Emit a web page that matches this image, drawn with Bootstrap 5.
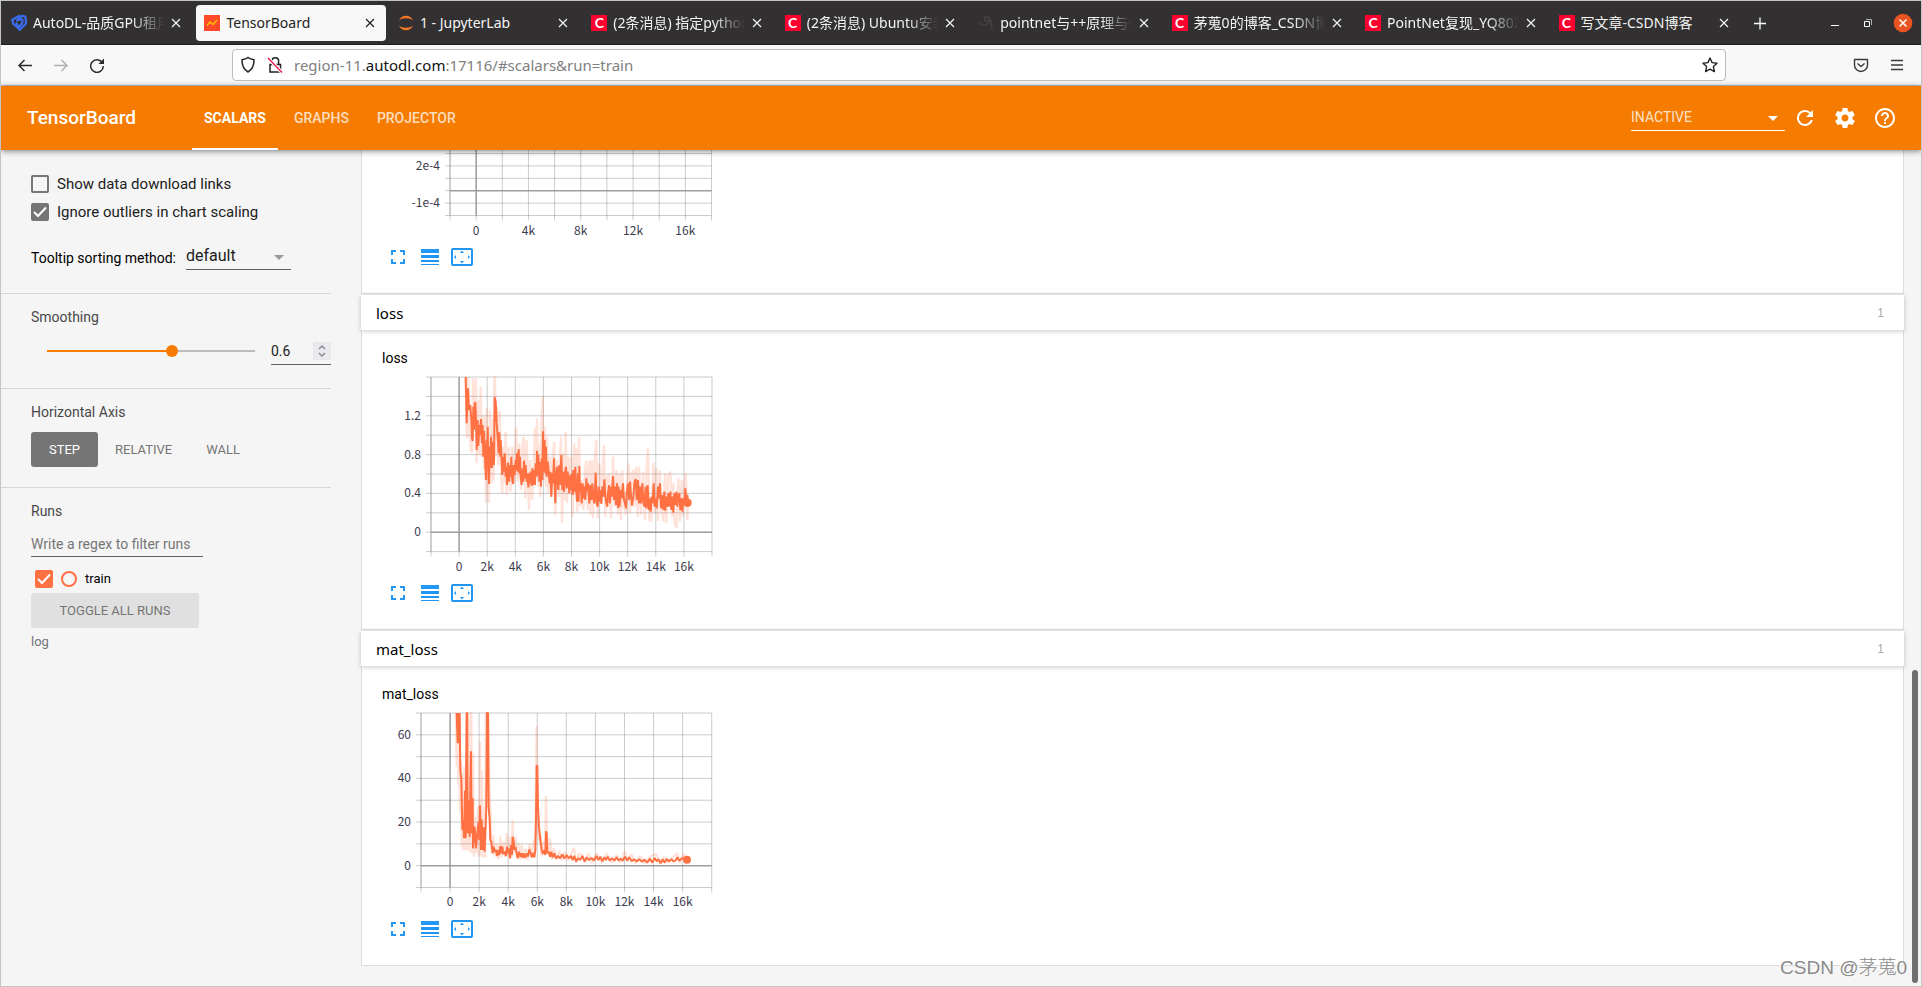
<!DOCTYPE html>
<html lang="en">
<head>
<meta charset="utf-8">
<meta name="viewport" content="width=device-width, initial-scale=1">
<title>TensorBoard</title>
<link rel="stylesheet" href="https://cdn.jsdelivr.net/npm/bootstrap@5.3.0/dist/css/bootstrap.min.css">
<style>
:root{--tb-orange:#f57c00;--run:#ff7043;--ui:"Noto Sans","Noto Sans CJK SC",sans-serif}
body{font-family:Roboto,"Noto Sans CJK SC",sans-serif;font-size:14px;line-height:20px;background:#f5f5f5;color:#212121}
.frame{border:1px solid #c4c4c4}
button,select,input{font-family:inherit}
.bare{background:none;border:0;padding:0;color:inherit;display:inline-flex;align-items:center;justify-content:center}
svg{display:block;flex:none}
/* browser window */
.tabstrip{height:44px;background:#323031;border-bottom:1px solid #1f1d1e;font-family:var(--ui);color:#f4f4f4}
.btab{flex:1 1 0;min-width:0;height:36px;margin:0 2px;padding:0 10px 0 8px;border-radius:4px;gap:6px}
.btab.active{background:#f8f8f8;color:#222}
.btab a{color:inherit;text-decoration:none;flex:1;min-width:0;overflow:hidden;white-space:nowrap}
.btab.cut a{-webkit-mask-image:linear-gradient(to left,transparent 0,#000 32px);mask-image:linear-gradient(to left,transparent 0,#000 32px)}
.winctl{width:179px;gap:17px;padding-right:8px}
.csdn{width:16px;height:16px;background:#fc0030;color:#fff;font:bold 14px/16px Lato,sans-serif;text-align:center;flex:none}
.urlbar{height:41px;background:#f8f8f8;border-bottom:1px solid #c0c0c0}
.navbtns{width:231px;padding-left:16px;gap:20px}
.urlbox{height:32px;border:1px solid #bdbdbd;border-radius:4px;background:#fff;padding:0 7px;gap:10px;font-family:var(--ui)}
.urltext{color:#808080;outline:0;white-space:nowrap;font-size:15px}
.urltext b{color:#111;font-weight:400}
.urlend{width:195px;gap:20px;padding-right:16px}
/* TensorBoard header */
.tbhead{height:64px;background:var(--tb-orange);color:#fff;position:relative;z-index:2;box-shadow:0 1px 6px rgba(0,0,0,.5);padding:0 16px 0 26px}
.tbhead h1{font-size:19px;line-height:28px;font-weight:500;width:165px}
.plug{display:flex;align-items:center;height:64px;padding:0 12px;color:rgba(255,255,255,.75);text-decoration:none;border-top:2px solid transparent;border-bottom:2px solid transparent;font-weight:500}
.plug:hover{color:#fff}
.plug.active{color:#fff;border-bottom-color:#fff;font-weight:700}
.line-select{appearance:none;background:no-repeat right 4px center/16px url("data:image/svg+xml,%3Csvg xmlns='http://www.w3.org/2000/svg' viewBox='0 0 16 16'%3E%3Cpath fill='%23999' d='M3 6h10l-5 5z'/%3E%3C/svg%3E");border:0;border-bottom:1px solid #616161;border-radius:0;padding:0 0 2px;color:#212121;height:25px;font-size:16px}
.sort-select{width:105px}
.reload-select{width:154px;border-color:#fff;color:rgba(255,255,255,.8);font-size:14px;height:26px;background-image:url("data:image/svg+xml,%3Csvg xmlns='http://www.w3.org/2000/svg' viewBox='0 0 16 16'%3E%3Cpath fill='%23fff' d='M3 6h10l-5 5z'/%3E%3C/svg%3E")}
.hbtn{width:40px;height:40px}
/* settings side */
.side{width:330px;flex:none}
.side section{padding:13px 0 23px 30px;border-bottom:1px solid #d6d6d6}
.side .general{padding-top:25px}
.side .axes{padding-bottom:20px}
.side h2{font-size:14px;line-height:20px;font-weight:400;color:#484848;margin:0 0 10px}
.tick{appearance:none;width:18px;height:18px;border:2px solid #757575;border-radius:2px;margin:0;flex:none}
.tick:checked{border:0;background:#757575 center/18px url("data:image/svg+xml,%3Csvg xmlns='http://www.w3.org/2000/svg' viewBox='0 0 18 18'%3E%3Cpath fill='none' stroke='%23fff' stroke-width='2' d='M3 9l4 4 8-8.500'/%3E%3C/svg%3E")}
.tick.run:checked{background-color:var(--run)}
.opt{font-size:15px;line-height:18px;gap:8px;margin-bottom:10px}
.sorting{gap:10px;margin-top:24px}
.slide{appearance:none;width:220px;height:12px;margin:0 10px;background:linear-gradient(to right,var(--tb-orange) 60%,#bdbdbd 0) center/calc(100% - 12px) 2px no-repeat}
.slide::-webkit-slider-thumb{appearance:none;width:12px;height:12px;border-radius:50%;background:var(--tb-orange)}
.numbox{width:60px;height:28px;border-bottom:1px solid #616161}
.numbox input{appearance:textfield;border:0;background:none;width:42px;padding:0;color:#212121}
.numbox input::-webkit-inner-spin-button{display:none}
.numbox button{width:18px;height:18px;background:#e9e9ed}
.axis{height:35px;font-size:13px;border-radius:3px;color:#757575;padding:0 17px}
.axis.active{background:#757575;color:#fff;padding:0 18px}
.regex{width:172px;border:0;border-bottom:1px solid #616161;background:none;padding:0;height:26px}
.regex::placeholder{color:#757575;opacity:1}
.runrow{height:18px;margin:13px 0 5px;padding-left:4px;gap:8px;font-size:13px}
.ring{width:16px;height:16px;border:2px solid var(--run);border-radius:50%}
.toggle{width:168px;height:35px;font-size:13px;background:#e0e0e0;color:#757575;border-radius:3px}
.logdir{font-size:13px;color:#757575}
/* chart panes */
.main{padding:0 17px 0 30px}
.pane{background:#fff;border:1px solid #ddd;border-top:0;padding:18px 20px 24px}
.pane.first{padding-top:0}
.pane h3{font-size:14px;line-height:20px;font-weight:400;color:#000;margin:0}
.cat{height:35px;margin-top:1px;padding:0 20px 0 15px;background:#fff;box-shadow:0 1px 5px rgba(0,0,0,.22);position:relative;font-size:15px;color:#000;font-family:var(--ui)}
.cat small{font:12px/20px "Liberation Sans",sans-serif;color:#aaa}
.plot text{font:12px "Noto Sans CJK SC",sans-serif;fill:#3d3b4f}
.tools{margin-top:5px;color:#2196f3}
.tools button{width:32px;height:24px}
/* overlays */
.thumb{position:absolute;right:3px;bottom:3px;width:6px;height:313px;border-radius:3px;background:#6e6e6e}
.wmark{position:absolute;right:14px;bottom:4px;font:19px/28px "Liberation Sans","Noto Sans CJK SC",sans-serif;font-weight:300;color:#8a8a8a;text-shadow:-1px -1px 0 #fff}
</style>
</head>
<body>
<div class="frame min-vh-100 d-flex flex-column position-relative overflow-hidden">

<div class="tabstrip d-flex align-items-center">
  <div class="d-flex flex-fill" id="tabs"></div>
  <div class="winctl d-flex align-items-center">
    <button class="bare me-auto ms-2" aria-label="New tab"><svg width="20" height="20" viewBox="0 0 20 20" stroke="#fff" stroke-width="1.300"><path d="M10 4.500v12M4 10.500h12"/></svg></button>
    <button class="bare" aria-label="Minimize"><svg width="16" height="16" stroke="#fff"><path d="M4 10.500h8"/></svg></button>
    <button class="bare" aria-label="Restore"><svg width="16" height="16" fill="none" stroke="#fff"><path d="M4.500 6.500h5v5h-5z"/><path d="M6 4.500h5.500V10" stroke="#aaa"/></svg></button>
    <button class="bare" aria-label="Close"><svg width="20" height="20"><circle cx="10" cy="10" r="9.300" fill="#e95420"/><path d="M6.500 6.500l7 7M13.500 6.500l-7 7" stroke="#fff" stroke-width="1.500"/></svg></button>
  </div>
</div>

<div class="urlbar d-flex align-items-center">
  <div class="navbtns d-flex">
    <button class="bare" aria-label="Back"><svg width="16" height="16" fill="none" stroke="#2b2b2b" stroke-width="1.500"><path d="M15 8.500H2M7.500 3L2 8.500 7.500 14"/></svg></button>
    <button class="bare" aria-label="Forward"><svg width="16" height="16" fill="none" stroke="#b0b0b0" stroke-width="1.500"><path d="M1 8.500h13M8.500 3L14 8.500 8.500 14"/></svg></button>
    <button class="bare" aria-label="Reload"><svg width="16" height="16" fill="none" stroke="#2b2b2b" stroke-width="1.500"><path d="M13.200 5.500A6.300 6.300 0 1 0 14.300 9"/><path d="M15 1.500v5.500H9.500z" fill="#2b2b2b" stroke="none"/></svg></button>
  </div>
  <div class="urlbox d-flex align-items-center flex-fill">
    <svg width="16" height="18" viewBox="0 0 16 18" fill="none" stroke="#222" stroke-width="1.500"><path d="M8 1.500c2 1.600 4 2 6 2.300 0 6-1.500 9.700-6 12.200C3.500 13.500 2 9.800 2 3.800c2-.3 4-.7 6-2.300z"/></svg>
    <svg width="18" height="18" viewBox="0 0 18 18" fill="none" stroke="#222" stroke-width="1.500"><path d="M4 8.500h10.500V16H4zM6 8V5a3.300 3.300 0 0 1 6.600 0v3"/><path d="M2 2l14 14.500" stroke="#fff" stroke-width="3.500"/><path d="M2 2l14 14.500" stroke="#e22850"/></svg>
    <div class="urltext flex-fill" role="textbox" contenteditable="true" spellcheck="false" aria-label="Address">region-11.<b>autodl.com</b>:17116/#scalars&amp;run=train</div>
    <button class="bare" aria-label="Bookmark"><svg width="16" height="16" viewBox="0 0 16 16" fill="none" stroke="#222" stroke-width="1.400" stroke-linejoin="round"><path d="M8 1l2.100 4.600 4.900.6-3.600 3.400 1 5L8 12.200l-4.400 2.400 1-5L1 6.200l4.900-.6z"/></svg></button>
  </div>
  <div class="urlend d-flex justify-content-end">
    <button class="bare" aria-label="Pocket"><svg width="16" height="16" viewBox="0 0 16 16" fill="none" stroke="#3a3a3a" stroke-width="1.400" stroke-linejoin="round"><path d="M1.500 2.500h13V8a6.500 6.500 0 0 1-13 0zM4.500 6.500L8 9.500l3.500-3"/></svg></button>
    <button class="bare" aria-label="Menu"><svg width="16" height="16" stroke="#3a3a3a" stroke-width="1.400"><path d="M2 3.500h12M2 8h12M2 12.500h12"/></svg></button>
  </div>
</div>

<header class="tbhead d-flex align-items-center">
  <h1 class="m-0">TensorBoard</h1>
  <nav class="d-flex gap-1 me-auto">
    <a class="plug active" href="#scalars">SCALARS</a>
    <a class="plug" href="#graphs">GRAPHS</a>
    <a class="plug" href="#projector">PROJECTOR</a>
  </nav>
  <select class="line-select reload-select" aria-label="Inactive dashboards"><option>INACTIVE</option></select>
  <button class="bare hbtn" aria-label="Reload data"><svg width="24" height="24" viewBox="0 0 24 24" fill="#fff"><path d="M17.650 6.350C16.200 4.900 14.210 4 12 4c-4.420 0-7.990 3.580-7.990 8s3.570 8 7.990 8c3.730 0 6.840-2.550 7.730-6h-2.080c-.82 2.330-3.040 4-5.650 4-3.310 0-6-2.690-6-6s2.690-6 6-6c1.660 0 3.140.69 4.220 1.780L13 11h7V4l-2.350 2.350z"/></svg></button>
  <button class="bare hbtn" aria-label="Settings"><svg width="24" height="24" viewBox="0 0 24 24" fill="#fff"><path d="M19.430 12.980c.04-.32.070-.64.070-.98s-.03-.66-.07-.98l2.110-1.650c.19-.15.240-.42.120-.64l-2-3.460c-.12-.22-.39-.3-.61-.22l-2.490 1c-.52-.4-1.080-.73-1.690-.98l-.38-2.650C14.460 2.180 14.250 2 14 2h-4c-.25 0-.46.180-.49.420l-.38 2.650c-.61.250-1.170.590-1.690.980l-2.490-1c-.23-.09-.49 0-.61.220l-2 3.460c-.13.220-.07.490.12.640l2.110 1.650c-.04.320-.07.650-.07.980s.03.660.070.980l-2.110 1.650c-.19.150-.24.420-.12.640l2 3.460c.12.220.39.300.61.220l2.490-1c.52.400 1.080.730 1.690.980l.38 2.650c.03.240.24.420.49.420h4c.25 0 .46-.18.490-.42l.38-2.650c.61-.25 1.170-.59 1.690-.98l2.490 1c.23.090.49 0 .61-.22l2-3.460c.12-.22.070-.49-.12-.64l-2.110-1.650zM12 15.500c-1.930 0-3.500-1.570-3.500-3.500s1.570-3.500 3.500-3.500 3.500 1.570 3.500 3.500-1.570 3.500-3.500 3.500z"/></svg></button>
  <button class="bare hbtn" aria-label="Help"><svg width="24" height="24" viewBox="0 0 24 24" fill="#fff"><path d="M11 18h2v-2h-2v2zm1-16C6.480 2 2 6.480 2 12s4.480 10 10 10 10-4.480 10-10S17.520 2 12 2zm0 18c-4.410 0-8-3.590-8-8s3.590-8 8-8 8 3.590 8 8-3.590 8-8 8zm0-14c-2.210 0-4 1.790-4 4h2c0-1.100.900-2 2-2s2 .900 2 2c0 2-3 1.750-3 5h2c0-2.250 3-2.500 3-5 0-2.210-1.790-4-4-4z"/></svg></button>
</header>

<div class="d-flex flex-fill">
  <aside class="side">
    <section class="general">
      <div class="opt d-flex"><input class="tick" type="checkbox" id="dl"><label for="dl">Show data download links</label></div>
      <div class="opt d-flex"><input class="tick" type="checkbox" id="ig" checked><label for="ig">Ignore outliers in chart scaling</label></div>
      <div class="sorting d-flex align-items-center"><label for="sort" class="text-black">Tooltip sorting method:</label>
        <select id="sort" class="line-select sort-select"><option>default</option></select></div>
    </section>
    <section>
      <h2>Smoothing</h2>
      <div class="d-flex align-items-center"><input class="slide" type="range" min="0" max="1" step="0.001" value="0.6" aria-label="Smoothing">
        <div class="numbox d-flex align-items-center"><input type="number" value="0.6" step="0.1" aria-label="Smoothing value"><button class="bare" aria-label="Step"><svg width="12" height="14" fill="none" stroke="#8c8c98" stroke-width="1.500"><path d="M3 5l3-3 3 3M3 9l3 3 3-3"/></svg></button></div></div>
    </section>
    <section class="axes">
      <h2>Horizontal Axis</h2>
      <div class="d-flex"><button class="bare axis active">STEP</button><button class="bare axis">RELATIVE</button><button class="bare axis">WALL</button></div>
    </section>
    <section class="border-0">
      <h2>Runs</h2>
      <input class="regex d-block" placeholder="Write a regex to filter runs" aria-label="Run filter">
      <div class="runrow d-flex align-items-center"><input class="tick run" type="checkbox" id="tr" checked><span class="ring"></span><label for="tr" class="text-black">train</label></div>
      <button class="bare toggle">TOGGLE ALL RUNS</button>
      <div class="logdir mt-1">log</div>
    </section>
  </aside>

  <main class="main flex-fill">
    <div class="pane first"><svg class="plot" id="c1" width="340" height="90" viewBox="382 150 340 90"></svg><div class="tools d-flex"></div></div>
    <div class="cat d-flex align-items-center justify-content-between"><span>loss</span><small>1</small></div>
    <div class="pane"><h3>loss</h3><svg class="plot" id="c2" width="340" height="208" viewBox="382 368 340 208"></svg><div class="tools d-flex"></div></div>
    <div class="cat d-flex align-items-center justify-content-between"><span>mat_loss</span><small>1</small></div>
    <div class="pane"><h3>mat_loss</h3><svg class="plot" id="c3" width="340" height="208" viewBox="382 704 340 208"></svg><div class="tools d-flex"></div></div>
  </main>
</div>
<div class="thumb"></div>
<div class="wmark">CSDN @茅蒐0</div>
</div>

<script>
// Browser tabs
const csdn='<span class="csdn">C</span>';
const tabs=[
 ['AutoDL-品质GPU租用','<svg width="16" height="18" viewBox="0 0 16 18" fill="none" stroke="#3a6df0" stroke-width="2.200" stroke-linejoin="round"><path d="M11.500 5L6 6.500l5-4.800 4 1"/><path d="M14.500 2.500l.5 7L8.500 16l-1-2.500 3.800-4.500.2-4"/><path d="M9 1.500L1 6l1.500 4L7 14l-.5-3L5 8.500"/></svg>',1],
 ['TensorBoard','<svg width="16" height="16" viewBox="0 0 16 16"><path fill="#ff4a2a" d="M0 0h16v16H0z"/><path d="M3 10.500L6 7l3 2.500L13 5" fill="none" stroke="#ffc400" stroke-width="1.500"/></svg>',0],
 ['1 - JupyterLab','<svg width="16" height="16" viewBox="0 0 16 16" fill="#f37626"><path d="M1 5.500C3-.8 13-.8 15 5.500 12 2.500 4 2.500 1 5.500zM1 10.500c2 6.300 12 6.300 14 0-3 3-11 3-14 0z"/></svg>',0],
 ['(2条消息) 指定python',csdn,1],['(2条消息) Ubuntu安装',csdn,1],
 ['pointnet与++原理与代','<svg width="16" height="16" viewBox="0 0 16 16" fill="none" stroke="#454342" stroke-width="1.500"><path d="M2 8c2 3 7 3 9-1V2H7v4h6l1 8"/></svg>',1],
 ['茅蒐0的博客_CSDN博客',csdn,1],['PointNet复现_YQ8023',csdn,1],['写文章-CSDN博客',csdn,0]];
document.getElementById('tabs').innerHTML=tabs.map((t,i)=>`<div class="btab d-flex align-items-center${i==1?' active':''}${t[2]?' cut':''}">${t[1]}<a href="#">${t[0]}</a><button class="bare" aria-label="Close tab"><svg width="12" height="12" stroke="currentColor" stroke-width="1.200"><path d="M2 2l8 8M10 2l-8 8"/></svg></button></div>`).join('');

// Buttons below each chart
document.querySelectorAll('.tools').forEach(t=>t.innerHTML=`
<button class="bare" aria-label="Expand"><svg width="24" height="24" viewBox="0 0 24 24" fill="currentColor"><path d="M7 14H5v5h5v-2H7v-3zm-2-4h2V7h3V5H5v5zm12 7h-3v2h5v-5h-2v3zM14 5v2h3v3h2V5h-5z"/></svg></button>
<button class="bare" aria-label="Toggle log scale"><svg width="24" height="24" viewBox="0 0 24 24" fill="currentColor"><path d="M3 4h18v4H3zM3 10h18v3H3zM3 15h18v2H3zM3 19h18v1H3z"/></svg></button>
<button class="bare" aria-label="Fit domain"><svg width="24" height="24" viewBox="0 0 24 24" fill="currentColor"><path fill-rule="evenodd" d="M3 3h18a2 2 0 0 1 2 2v14a2 2 0 0 1-2 2H3a2 2 0 0 1-2-2V5a2 2 0 0 1 2-2zm0 2v14h18V5z"/><path d="M12 5.500l2 2.500h-4zM12 18.500l2-2.500h-4zM4 12l2-2v4zM20 12l-2-2v4z"/></svg></button>`);

// Grid, axes, tick labels and the two lines of one chart
function plot(id,o){
 const X=i=>o.x0+o.dx*i, Y=j=>o.y0+o.dy*j, R=X(o.nx-1), B=Y(o.ny-1), L=X(0), T=o.top;
 let s='<g stroke="#808080" stroke-opacity=".4" stroke-width="1">';
 for(let i=0;i<o.nx;i++)s+=`<path d="M${X(i)} ${T}V${B+5}"/>`;
 for(let j=0;j<o.ny;j++)s+=`<path d="M${L-5} ${Y(j)}H${R}"/>`;
 s+=`</g><g stroke="#808080" stroke-opacity=".65" stroke-width="1.500"><path d="M${X(1)} ${T}V${B}M${L} ${Y(o.zero)}H${R}"/></g>`;
 s+=`<path stroke="#999" stroke-opacity=".6" d="M${L} ${T}V${B}"/>`;
 o.xl.forEach(([i,t])=>s+=`<text x="${X(i)}" y="${B+19}" text-anchor="middle">${t}</text>`);
 o.yl.forEach(([j,t])=>s+=`<text x="${L-10}" y="${Y(j)+4}" text-anchor="end">${t}</text>`);
 if(o.line)s+=`<g transform="translate(350 ${o.oy}) scale(.33333)" fill="none" stroke="#ff7043" stroke-linejoin="bevel"><polyline opacity=".2" stroke-width="7" points="${o.raw}"/><polyline stroke-width="6" points="${o.line}"/><circle cx="${o.dot[0]}" cy="${o.dot[1]}" r="12" fill="#ff7043" stroke="none"/></g>`;
 document.getElementById(id).innerHTML=s;
}
plot('c1',{x0:450,dx:26.150,nx:11,y0:153.500,dy:12.400,ny:6,top:150,zero:3,xl:[[1,'0'],[3,'4k'],[5,'8k'],[7,'12k'],[9,'16k']],yl:[[1,'2e-4'],[4,'-1e-4']]});
const k=[0,2,4,6,8,10,12,14,16].map((v,i)=>[i+1,v?v+'k':'0']);
plot('c2',{x0:431,dx:28.100,nx:11,y0:377,dy:19.400,ny:10,top:377,zero:8,xl:k,yl:[[2,'1.2'],[4,'0.8'],[6,'0.4'],[8,'0']],oy:340,dot:[1013,488],
raw:'347,111 351,295 354,111 358,265 363,335 367,335 369,115 374,250 378,115 380,370 384,180 388,345 392,140 395,350 398,225 402,390 406,230 408,488 411,205 414,410 417,488 420,212 424,430 428,235 431,420 433,111 435,111 438,350 441,200 445,375 449,213 453,400 457,460 460,320 463,430 467,275 470,465 476,320 481,455 487,320 492,430 498,262 503,425 508,310 513,450 517,320 521,290 526,475 530,300 537,510 540,360 547,480 552,350 555,265 558,400 561,235 565,440 568,310 571,470 574,260 578,170 581,420 584,260 588,440 591,290 595,460 599,350 604,470 608,350 613,305 616,525 621,360 627,470 630,345 633,290 636,548 641,340 644,480 647,275 651,490 655,350 660,420 664,350 668,530 672,310 676,460 679,325 682,515 687,292 691,500 695,420 700,510 705,390 709,362 713,510 718,362 721,525 725,360 729,535 733,370 739,300 743,535 748,370 753,490 757,400 762,316 766,530 771,410 777,400 783,535 789,350 794,500 799,390 804,525 808,400 813,540 817,390 822,500 828,525 832,410 836,370 840,520 845,400 850,390 854,500 859,380 863,530 867,380 873,525 879,395 885,540 889,400 894,325 898,540 904,543 910,368 914,520 919,385 924,543 929,390 934,510 940,545 945,400 949,550 954,410 961,395 966,530 970,430 974,550 980,563 985,415 990,545 995,420 999,530 1004,430 1007,400 1012,540 1015,488',
line:'347,111 350,250 354,145 357,210 361,195 364,240 366,295 368,303 370,200 372,270 374,190 376,187 378,235 380,330 383,240 385,318 388,255 390,285 393,237 396,310 398,255 400,350 402,272 405,355 408,420 410,300 412,370 413,260 415,390 417,432 419,320 421,384 423,290 426,384 429,305 432,375 434,172 437,185 440,250 443,290 446,340 448,277 451,350 452,300 455,360 457,405 459,350 461,395 464,340 467,410 469,380 471,435 474,368 477,425 479,375 482,410 484,350 486,415 489,432 491,375 494,405 497,360 499,390 501,340 503,395 506,328 508,400 510,350 512,410 515,435 518,385 520,425 522,362 525,415 527,375 530,425 532,400 535,442 538,400 540,430 542,395 545,438 547,385 550,435 553,390 555,435 557,370 560,410 561,332 563,405 565,345 568,425 570,365 573,440 575,355 577,420 579,274 582,395 584,300 586,400 588,320 590,410 593,365 596,395 599,430 601,395 604,470 607,400 609,430 612,355 614,440 616,490 618,410 621,380 623,430 625,450 628,375 630,435 634,345 637,450 640,395 642,455 645,400 648,380 650,445 653,395 656,430 658,460 661,405 663,450 666,400 668,465 670,390 673,455 676,380 678,440 681,485 684,400 686,485 688,378 690,455 693,430 695,490 698,430 700,475 703,440 706,480 709,415 711,455 714,430 718,490 721,435 724,480 727,430 730,475 733,490 737,398 740,490 743,500 746,440 749,485 751,450 754,492 757,440 760,470 763,418 766,470 769,490 772,500 774,460 777,435 780,490 782,440 785,470 789,408 792,480 795,440 798,495 801,430 804,505 806,440 809,500 812,450 815,475 819,430 822,480 825,490 828,505 830,460 834,430 837,480 840,425 843,465 846,497 850,470 853,430 857,417 860,480 864,420 867,490 870,440 873,490 877,430 880,485 883,500 887,440 889,505 893,435 896,510 899,475 902,515 905,470 908,490 911,430 914,500 917,475 920,505 924,440 927,475 930,430 933,505 937,465 940,510 943,455 946,512 949,470 952,500 955,460 958,500 961,455 964,510 967,470 970,518 973,460 976,495 979,455 982,500 985,465 988,460 991,510 994,475 997,515 1000,475 1003,495 1006,445 1009,500 1012,465 1015,488'});
plot('c3',{x0:421,dx:29.070,nx:11,y0:713,dy:21.810,ny:9,top:713,zero:7,xl:k,yl:[[1,'60'],[3,'40'],[5,'20'],[7,'0']],oy:620,dot:[1011,719],
raw:'318,279 320,440 323,279 325,495 328,279 330,575 333,430 335,680 338,460 340,690 344,440 347,690 350,279 352,690 355,560 358,695 361,279 364,279 366,700 369,400 372,710 376,590 380,700 384,560 387,710 390,365 392,710 395,450 398,712 402,560 405,714 408,279 415,279 418,500 421,560 425,700 430,645 435,710 440,670 446,718 451,650 455,712 461,665 466,712 470,640 475,710 480,650 484,715 488,602 491,700 496,650 501,712 505,670 510,720 515,675 520,715 527,685 532,720 539,672 545,712 550,670 556,650 560,318 563,600 567,660 571,640 575,710 580,665 585,700 588,528 591,650 595,700 600,655 606,718 612,685 619,720 627,692 635,722 645,695 655,722 664,700 672,683 679,728 687,700 695,705 705,728 715,700 726,730 740,700 755,728 770,700 785,729 800,705 812,728 824,694 834,720 844,702 856,730 870,708 885,730 900,710 918,702 930,732 940,710 955,728 970,710 982,700 990,728 1001,700 1008,722 1011,719',
line:'320,279 323,370 325,279 327,370 329,279 331,450 334,480 337,630 340,600 342,655 345,512 347,655 349,400 350,279 352,279 353,640 355,540 359,650 361,500 363,394 365,640 368,535 369,685 374,620 378,685 382,640 386,605 388,660 390,556 393,690 395,598 398,690 401,622 404,695 406,640 409,560 411,279 414,279 416,560 419,600 421,660 424,665 428,700 431,680 434,695 438,690 441,708 445,690 448,705 451,678 454,700 457,680 460,702 464,695 468,708 471,680 474,700 477,685 480,715 483,675 486,705 488,650 491,665 493,690 496,680 500,700 503,715 507,695 510,710 514,700 517,713 521,700 525,714 530,700 534,710 538,688 542,700 546,712 550,698 553,712 556,690 558,600 560,437 562,437 564,560 567,620 571,660 575,690 579,702 583,690 586,705 588,634 590,640 592,700 596,695 600,710 604,695 608,712 613,700 618,715 624,708 630,715 637,703 643,716 650,705 656,715 663,708 668,720 673,708 678,724 684,715 690,720 697,708 704,724 710,712 717,720 724,714 732,722 739,708 745,720 751,710 757,724 763,712 768,720 773,710 779,722 786,715 793,722 800,712 806,722 812,716 818,722 825,710 831,722 838,712 845,724 852,718 860,724 868,718 876,725 884,719 892,728 900,716 907,728 914,714 920,724 926,718 932,730 938,718 944,728 950,717 957,724 964,718 970,724 976,722 982,712 988,722 995,716 1001,714 1008,720 1011,719'});
</script>
<script src="https://cdn.jsdelivr.net/npm/bootstrap@5.3.0/dist/js/bootstrap.bundle.min.js"></script>
</body>
</html>
